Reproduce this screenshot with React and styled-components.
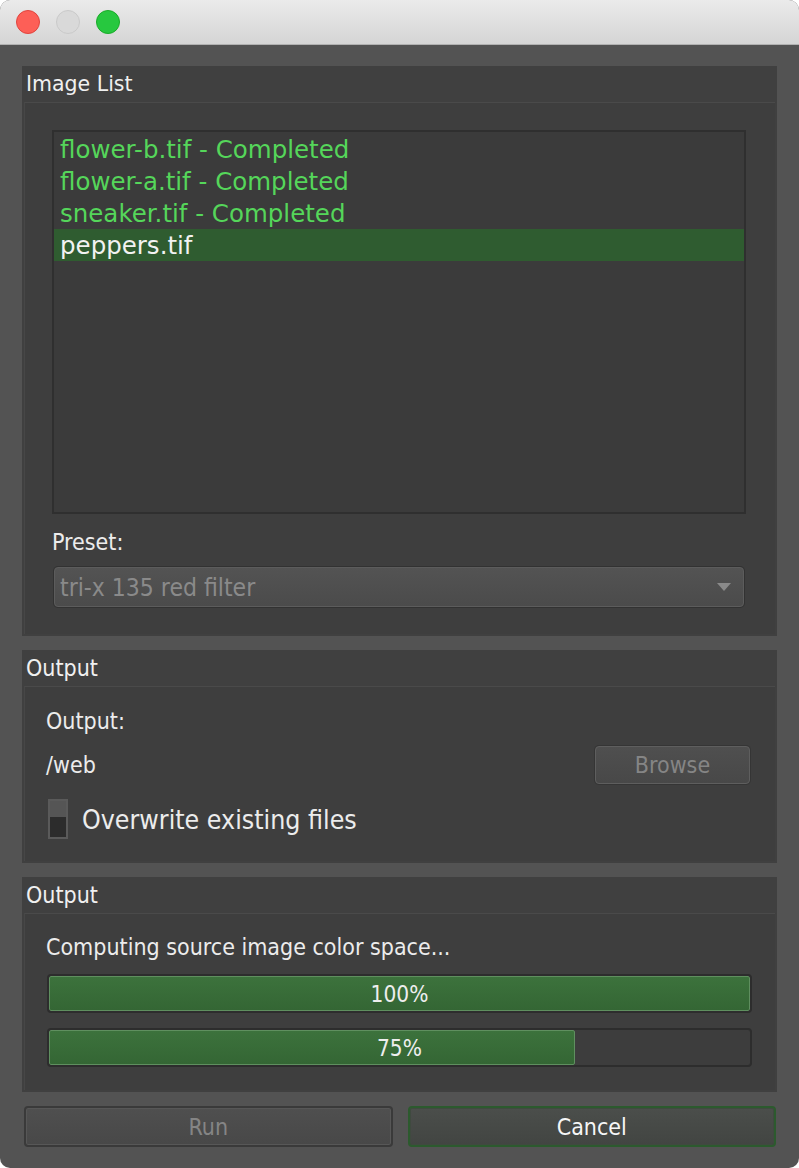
import React from "react";
import styled, { createGlobalStyle } from "styled-components";

const GlobalStyle = createGlobalStyle`
  html, body {
    margin: 0;
    padding: 0;
    background: #ffffff;
  }
  * {
    box-sizing: border-box;
  }
`;

const WIDE = `"DejaVu Sans", "Open Sans", sans-serif`;
const NARROW = `"DejaVu Sans Condensed", "Liberation Sans Narrow", "Roboto Condensed", "DejaVu Sans", sans-serif`;

const Window = styled.div`
  width: 799px;
  height: 1168px;
  background: #535353;
  border-radius: 10px;
  overflow: hidden;
  display: flex;
  flex-direction: column;
`;

const TitleBar = styled.div`
  height: 45px;
  flex: none;
  background: linear-gradient(#ebebeb, #d5d5d5);
  border-bottom: 1px solid #b1b1b1;
  display: flex;
  align-items: center;
  gap: 16px;
  padding-left: 16px;
`;

const Light = styled.span`
  width: 24px;
  height: 24px;
  border-radius: 50%;
  background: ${(p) => p.$color};
  border: 1px solid ${(p) => p.$edge};
`;

const Body = styled.div`
  flex: 1;
  display: flex;
  flex-direction: column;
  gap: 14px;
  padding: 21px 22px 23px 22px;
`;

const Panel = styled.section`
  background: #404040;
  display: flex;
  flex-direction: column;
  padding: 0 2px 2px 2px;
`;

const PanelTitle = styled.div`
  height: 36px;
  display: flex;
  align-items: center;
  padding-left: 2px;
  color: #f0f0f0;
  font-family: ${(p) => (p.$wide ? WIDE : NARROW)};
  font-size: ${(p) => (p.$wide ? "20.5px" : "23px")};
`;

const PanelInner = styled.div`
  background: #3e3e3e;
  border-top: 1px solid #4a4a4a;
  border-left: 1px solid #474747;
  display: flex;
  flex-direction: column;
  padding: ${(p) => p.$pad};
  height: ${(p) => p.$h}px;
`;

const ListBox = styled.ul`
  list-style: none;
  margin: 0;
  padding: 1px 0;
  height: 384px;
  flex: none;
  background: #3b3b3b;
  border: 2px solid #2f2f2f;
`;

const ListItem = styled.li`
  height: 32px;
  display: flex;
  align-items: center;
  padding-left: 6px;
  font-family: ${WIDE};
  font-size: 24.5px;
  color: ${(p) => (p.$selected ? "#f2f2f2" : "#55d65a")};
  background: ${(p) => (p.$selected ? "#2f5c30" : "transparent")};
`;

const Label = styled.div`
  font-family: ${NARROW};
  font-size: 23px;
  color: #ececec;
  line-height: 28px;
  height: 28px;
`;

const Combo = styled.div`
  height: 40px;
  flex: none;
  margin: 0 2px;
  background: linear-gradient(#535353, #4b4b4b);
  border: 1px solid #5c5c5c;
  box-shadow: 0 0 0 1px #323232;
  border-radius: 4px;
  display: flex;
  align-items: center;
  justify-content: space-between;
  padding: 0 12px 0 5px;
  font-family: ${NARROW};
  font-size: 24.5px;
  color: #8a8a8a;
`;

const Arrow = styled.span`
  width: 0;
  height: 0;
  border-left: 7px solid transparent;
  border-right: 7px solid transparent;
  border-top: 8px solid #8a8a8a;
`;

const Row = styled.div`
  display: flex;
  align-items: center;
  justify-content: space-between;
`;

const PushButton = styled.button`
  height: ${(p) => p.$h || 38}px;
  width: ${(p) => (p.$w ? `${p.$w}px` : "auto")};
  flex: ${(p) => (p.$w ? "none" : 1)};
  border-radius: 4px;
  border: ${(p) =>
    p.$primary ? "2px solid #2c5a2e" : p.$light ? "1px solid #5e5e5e" : "2px solid #3a3a3a"};
  box-shadow: ${(p) =>
    p.$primary
      ? "inset 0 0 0 1px #3f4a3f"
      : p.$light
      ? "0 0 0 1px #353535"
      : "inset 0 0 0 1px #575757"};
  background: ${(p) =>
    p.$primary
      ? "linear-gradient(#4b4e4b, #424542)"
      : "linear-gradient(#4f4f4f, #484848)"};
  color: ${(p) => (p.$primary ? "#f6f6f6" : "#858585")};
  font-family: ${NARROW};
  font-size: 23px;
  padding: 0;
`;

const CheckRow = styled.label`
  display: flex;
  align-items: center;
  gap: 14px;
  margin-left: 2px;
`;

const Toggle = styled.span`
  width: 20px;
  height: 40px;
  flex: none;
  border: 2px solid #5a5a5a;
  background: linear-gradient(#555 0 45%, #2c2c2c 45% 100%);
`;

const BigText = styled.span`
  font-family: ${NARROW};
  font-size: 26.5px;
  color: #ececec;
`;

const Track = styled.div`
  position: relative;
  height: 39px;
  background: #3d3d3d;
  border: 2px solid #2d2d2d;
  border-radius: 4px;
  overflow: hidden;
`;

const Fill = styled.div`
  height: 100%;
  background: linear-gradient(#3c723c, #346634);
  border: 1px solid #5f8f5f;
  border-radius: 2px;
`;

const BarText = styled.span`
  position: absolute;
  inset: 0;
  display: flex;
  align-items: center;
  justify-content: center;
  font-family: ${NARROW};
  font-size: 22.5px;
  color: #eeeeee;
`;

const Bars = styled.div`
  display: flex;
  flex-direction: column;
  gap: 15px;
  margin: 0 23px 0 1px;
`;

const ButtonRow = styled.div`
  display: flex;
  gap: 15px;
  margin: 0 1px 0 2px;
`;

function Progress({ value }) {
  return (
    <Track>
      <Fill style={{ width: `${value}%` }} />
      <BarText>{value}%</BarText>
    </Track>
  );
}

const files = [
  { name: "flower-b.tif - Completed" },
  { name: "flower-a.tif - Completed" },
  { name: "sneaker.tif - Completed" },
  { name: "peppers.tif", selected: true },
];

export default function App() {
  return (
    <>
      <GlobalStyle />
      <Window>
        <TitleBar>
          <Light $color="#fd5f57" $edge="#e0443e" />
          <Light $color="#d9d9d9" $edge="#c9c9c9" />
          <Light $color="#27c83f" $edge="#1aab29" />
        </TitleBar>
        <Body>
          <Panel>
            <PanelTitle $wide>Image List</PanelTitle>
            <PanelInner $pad="27px 29px 0 27px" $h={532}>
              <ListBox>
                {files.map((f) => (
                  <ListItem key={f.name} $selected={f.selected}>
                    {f.name}
                  </ListItem>
                ))}
              </ListBox>
              <Label style={{ marginTop: 14, marginBottom: 11 }}>Preset:</Label>
              <Combo>
                <span>tri-x 135 red filter</span>
                <Arrow />
              </Combo>
            </PanelInner>
          </Panel>

          <Panel>
            <PanelTitle>Output</PanelTitle>
            <PanelInner $pad="20px 25px 0 21px" $h={175}>
              <Label>Output:</Label>
              <Row style={{ marginTop: 11 }}>
                <Label>/web</Label>
                <PushButton $w={155} $light>
                  Browse
                </PushButton>
              </Row>
              <CheckRow style={{ marginTop: 15 }}>
                <Toggle />
                <BigText>Overwrite existing files</BigText>
              </CheckRow>
            </PanelInner>
          </Panel>

          <Panel>
            <PanelTitle>Output</PanelTitle>
            <PanelInner $pad="19px 0 0 21px" $h={177}>
              <Label style={{ marginBottom: 13 }}>
                Computing source image color space...
              </Label>
              <Bars>
                <Progress value={100} />
                <Progress value={75} />
              </Bars>
            </PanelInner>
          </Panel>

          <ButtonRow>
            <PushButton $h={41}>Run</PushButton>
            <PushButton $h={41} $primary>
              Cancel
            </PushButton>
          </ButtonRow>
        </Body>
      </Window>
    </>
  );
}
